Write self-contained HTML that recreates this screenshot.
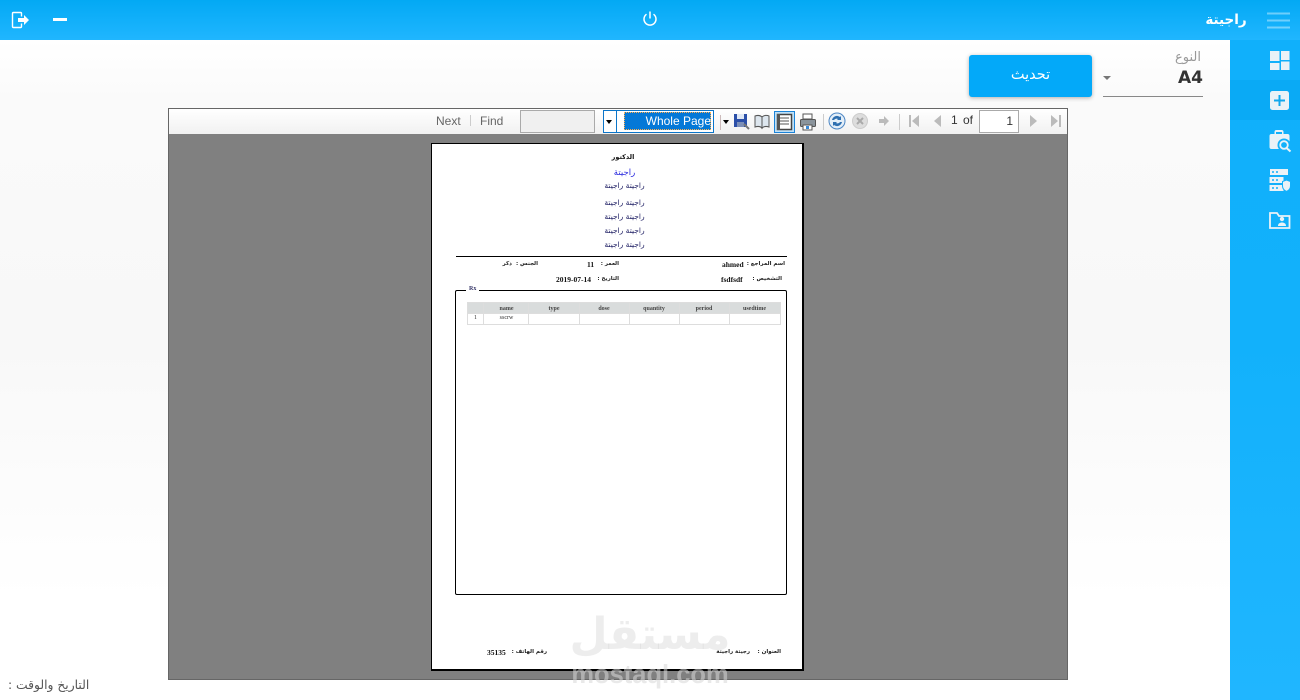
<!DOCTYPE html>
<html lang="ar">
<head>
<meta charset="utf-8">
<title>راجيتة</title>
<style>
html,body{margin:0;padding:0;width:1300px;height:700px;overflow:hidden;background:#fff;font-family:"Liberation Sans","Noto Sans CJK SC",sans-serif}
.a{position:absolute;white-space:nowrap}
#bg{left:0;top:40px;width:1230px;height:660px;background:linear-gradient(#fff 0,#fafafa 60px,#f8f8f8 300px,#fff 560px)}
#top{left:0;top:0;width:1300px;height:40px;background:linear-gradient(#03a9f4,#20b6ff)}
#side{left:1230px;top:40px;width:70px;height:660px;background:linear-gradient(#10b0fb,#12b1fb 300px,#20b6ff)}
.t{direction:rtl;text-align:center;font-family:"Liberation Sans","DejaVu Sans",sans-serif}
.s{font-family:"Liberation Serif",serif;font-weight:bold;font-size:7.500px;color:#111}
.ar{font-family:"DejaVu Sans",sans-serif;font-size:5.500px;font-weight:bold;color:#222;direction:rtl}
.b{color:#226;font-size:7.500px;font-family:"DejaVu Sans",sans-serif;direction:rtl;left:438px;width:373px;text-align:center}
.th{top:304px;height:10px;font:bold 6px/10px "Liberation Serif",serif;color:#444;text-align:center}
.v{background:#ddd;width:1px}
</style>
</head>
<body>
<div class="a" id="bg"></div>
<div class="a" id="top"></div>
<div class="a" id="side"></div>
<div class="a" style="left:1230px;top:80px;width:70px;height:40px;background:#0aaaf5"></div>

<!-- header icons -->
<svg class="a" style="left:0;top:0" width="80" height="40">
<path d="M21.500 16.500V13.500a1 1 0 0 0-1-1h-7a1 1 0 0 0-1 1v13a1 1 0 0 0 1 1h7a1 1 0 0 0 1-1V23.500" fill="none" stroke="#fff" stroke-width="1.400"/>
<path d="M18 18h6v-3l5 5-5 5v-3h-6z" fill="#fff"/>
<rect x="53" y="18" width="14" height="3" fill="#fff"/>
</svg>
<svg class="a" style="left:640px;top:9px" width="20" height="20">
<path d="M6.500 5.200a6 6 0 1 0 7 0" fill="none" stroke="#fff" stroke-width="1.500"/>
<path d="M10 2.500v7" stroke="#fff" stroke-width="1.500"/>
</svg>
<div class="a" style="left:1193px;top:12px;width:66px;text-align:center;color:#fff;font:bold 13.500px 'DejaVu Sans',sans-serif;direction:rtl">راجيتة</div>
<svg class="a" style="left:1267px;top:12px" width="24" height="18"><path d="M0 1.500h23M0 8.500h23M0 15.500h23" stroke="#fff" stroke-opacity=".4" stroke-width="2"/></svg>

<!-- side icons -->
<svg class="a" style="left:1267px;top:49px" width="26" height="190" fill="#eaf2f7">
<rect x="3" y="2" width="9.500" height="10"/><rect x="14" y="2" width="8.500" height="9"/><rect x="3" y="14" width="9.500" height="7"/><rect x="14" y="12.500" width="8.500" height="8.500"/>
<rect x="3" y="42" width="19" height="19" rx="2.500"/><path d="M12.500 46v11M7 51.500h11" stroke="#10a8ee" stroke-width="2"/>
<path d="M2.500 87a2 2 0 0 1 2-2h3v-2a2 2 0 0 1 2-2h5a2 2 0 0 1 2 2v2h4a2 2 0 0 1 2 2v13H4.500a2 2 0 0 1-2-2z"/>
<path d="M9 85v-2h6v2" fill="#12b1fb"/>
<circle cx="17" cy="96" r="6.500" fill="#12b1fb"/>
<circle cx="17" cy="96" r="3.800" fill="none" stroke="#eaf2f7" stroke-width="1.800"/><path d="M19.500 99l4 3.500" stroke="#eaf2f7" stroke-width="2"/>
<rect x="3" y="120" width="18" height="6"/><rect x="2.500" y="128" width="14" height="6"/><rect x="2.500" y="136" width="14" height="6"/>
<path d="M19.500 131l4 1.500v4.500c0 3-2 4.500-4 5.500-2-1-4-2.500-4-5.500v-4.500z" stroke="#12b1fb" stroke-width="1"/>
<path d="M5 123h2M9 123h2M5 131h2M9 131h2M5 139h2M9 139h2" stroke="#10b0fb" stroke-width="1.500"/>
<path d="M3 164h7l2 3h10.500v12H3z" fill="none" stroke="#eaf2f7" stroke-width="1.800"/>
<circle cx="15" cy="170" r="2.200"/><path d="M11 177c0-2.500 1.800-3.500 4-3.500s4 1 4 3.500z"/>
</svg>

<!-- top controls -->
<div class="a" style="left:1150px;top:50px;width:51px;text-align:right;color:#999;font:13px 'DejaVu Sans',sans-serif">النوع</div>
<div class="a" style="left:1150px;top:68px;width:53px;text-align:right;color:#333;font:bold 17px 'DejaVu Sans',sans-serif">A4</div>
<div class="a" style="left:1103px;top:96px;width:100px;height:1px;background:#888"></div>
<div class="a" style="left:1103px;top:76px;width:0;height:0;border:4px solid transparent;border-top:4px solid #777"></div>
<div class="a" style="left:969px;top:55px;width:123px;height:42px;background:#03a9f9;border-radius:3px;box-shadow:0 1px 4px rgba(0,0,0,.3);color:#fff;text-align:center;font:14.500px/41px 'DejaVu Sans',sans-serif">تحديث</div>

<!-- report viewer -->
<div class="a" style="left:168px;top:108px;width:898px;height:570px;border:1px solid #666;background:#808080"></div>
<div class="a" style="left:169px;top:109px;width:898px;height:25px;background:linear-gradient(#fff,#f1f1f1)"></div>

<div class="a" style="left:436px;top:114px;color:#666;font-size:12px">Next</div>
<div class="a" style="left:470px;top:115px;width:1px;height:11px;background:#ccc"></div>
<div class="a" style="left:480px;top:114px;color:#666;font-size:12px">Find</div>
<div class="a" style="left:520px;top:110px;width:73px;height:21px;border:1px solid #aaa;background:#f0f0f0"></div>
<div class="a" style="left:603px;top:110px;width:109px;height:21px;border:1px solid #0b75c9;background:#fff"></div>
<div class="a" style="left:616px;top:110px;width:1px;height:23px;background:#0b75c9"></div>
<div class="a" style="left:606px;top:120px;width:0;height:0;border:3px solid transparent;border-top:4px solid #000"></div>
<div class="a" style="left:624px;top:112px;width:87px;height:18px;background:#0478d7;outline:1px dotted #ffb050;outline-offset:-1px;color:#fff;font-size:12px;line-height:19px;text-align:right">Whole Page</div>
<div class="a" style="left:720px;top:115px;width:1px;height:15px;background:#cbb"></div>
<div class="a" style="left:723px;top:120px;width:0;height:0;border:3px solid transparent;border-top:4px solid #000"></div>

<svg class="a" style="left:730px;top:109px" width="340" height="24">
<path d="M4 5h13v13H4z" fill="#2b4fa8"/><path d="M7 5h7v5H7z" fill="#dfe8f5"/><path d="M7 13h7v5H7z" fill="#7c8fb8"/><path d="M14 15l5 5" stroke="#777" stroke-width="2"/>
<path d="M25 7c3-1 5-1 7 1v11c-2-2-4-2-7-1zM32 8c2-2 5-2 7-1v11c-3-1-5-1-7 1z" fill="#dde6ee" stroke="#555"/>
<rect x="44.500" y="2.500" width="20" height="21" fill="#bfe0f7" stroke="#1b83d8"/>
<rect x="47.500" y="5.500" width="14" height="15" fill="#fff" stroke="#444" stroke-width="1.500"/><path d="M50 9h9M50 12h9M50 15h9" stroke="#555"/><rect x="47" y="5" width="3" height="16" fill="#555"/>
<path d="M73 5h9v5h-9z" fill="#fff" stroke="#555"/><rect x="70.500" y="10.500" width="15" height="7" rx="1" fill="#8a949c" stroke="#555"/><path d="M73 16h9v5h-9z" fill="#fff" stroke="#555"/><rect x="76" y="17" width="3" height="3" fill="#3a8ad8"/>
<path d="M93.500 5v16" stroke="#ccc"/>
<circle cx="107" cy="12" r="8" fill="#e3eef8" stroke="#4c86c4"/><path d="M102 11a5 5 0 0 1 8-3l1-1v4h-4l1-1a3 3 0 0 0-4 1zM112 13a5 5 0 0 1-8 3l-1 1v-4h4l-1 1a3 3 0 0 0 4-1z" fill="#2e6fb0"/>
<circle cx="130" cy="12" r="7.500" fill="#ddd" stroke="#ccc"/><path d="M127 9l6 6M133 9l-6 6" stroke="#aaa" stroke-width="2"/>
<path d="M149 10h5V7l5 5-5 5v-3h-5z" fill="#bbb"/>
<path d="M169.500 5v16" stroke="#ccc"/>
<path d="M179 6h2v12h-2zM189 6v12l-7-6z" fill="#bbb"/>
<path d="M211 6v12l-7-6z" fill="#bbb"/>
<path d="M300 6v12l7-6z" fill="#bbb"/>
<path d="M321 6v12l7-6zM329 6h2v12h-2z" fill="#bbb"/>
</svg>
<div class="a" style="left:951px;top:113px;color:#333;font-size:12px">1</div>
<div class="a" style="left:963px;top:113px;color:#333;font-size:12px">of</div>
<div class="a" style="left:979px;top:110px;width:33px;height:21px;border:1px solid #aaa;background:#fff;color:#333;font-size:12px;line-height:21px;text-align:right;padding-right:5px">1</div>

<!-- page -->
<div class="a" style="left:431px;top:143px;width:370px;height:525px;background:#fff;border:1px solid #000;border-right:2px solid #000;border-bottom:2px solid #000"></div>

<div class="a t" style="left:431px;width:384px;top:153px;color:#111;font-size:6.500px;font-weight:bold">الدكتور</div>
<div class="a b" style="top:168px;color:#22d;font-size:8.500px">راجيتة</div>
<div class="a b" style="top:181px">راجيتة راجيتة</div>
<div class="a b" style="top:198px">راجيتة راجيتة</div>
<div class="a b" style="top:212px">راجيتة راجيتة</div>
<div class="a b" style="top:226px">راجيتة راجيتة</div>
<div class="a b" style="top:240px">راجيتة راجيتة</div>
<div class="a" style="left:456px;top:256px;width:331px;height:1px;background:#000"></div>

<div class="a ar" style="right:515px;top:261px">اسم المراجع :</div>
<div class="a s" style="left:722px;top:260px">ahmed</div>
<div class="a ar" style="right:681px;top:261px">العمر :</div>
<div class="a s" style="left:587px;top:260px">11</div>
<div class="a ar" style="right:762px;top:261px">الجنس :</div>
<div class="a ar" style="right:788px;top:261px">ذكر</div>
<div class="a ar" style="right:518px;top:276px">التشخيص :</div>
<div class="a s" style="left:721px;top:275px">fsdfsdf</div>
<div class="a ar" style="right:681px;top:276px">التاريخ :</div>
<div class="a s" style="left:556px;top:275px">2019-07-14</div>

<div class="a" style="left:455px;top:290px;width:330px;height:303px;border:1px solid #000;border-radius:2px"></div>
<div class="a s" style="left:466px;top:286px;height:9px;line-height:7px;background:#fff;padding:0 3px;color:#336;font-size:6px">Rx</div>

<div class="a" style="left:467px;top:302px;width:312px;height:21px;border:1px solid #ddd;box-sizing:content-box"></div>
<div class="a" style="left:468px;top:303px;width:312px;height:10px;background:#d9dcdc"></div>
<div class="a" style="left:468px;top:313px;width:312px;height:1px;background:#ddd"></div>
<div class="a th" style="left:484px;width:45px">name</div>
<div class="a th" style="left:529px;width:50px">type</div>
<div class="a th" style="left:579px;width:50px">dose</div>
<div class="a th" style="left:629px;width:50px">quantity</div>
<div class="a th" style="left:679px;width:50px">period</div>
<div class="a th" style="left:729px;width:51px">usedtime</div>
<div class="a v" style="left:483px;top:303px;height:21px"></div>
<div class="a v" style="left:528px;top:303px;height:21px"></div>
<div class="a v" style="left:579px;top:303px;height:21px"></div>
<div class="a v" style="left:629px;top:303px;height:21px"></div>
<div class="a v" style="left:679px;top:303px;height:21px"></div>
<div class="a v" style="left:729px;top:303px;height:21px"></div>
<div class="a" style="left:474px;top:315px;font:6px 'Liberation Serif',serif;color:#333">1</div>
<div class="a" style="left:484px;width:45px;top:315px;text-align:center;font:6px 'Liberation Serif',serif;color:#333">sscrw</div>

<div class="a ar" style="right:519px;top:649px">العنوان :</div>
<div class="a ar" style="right:550px;top:649px">رجيتة راجيتة</div>
<div class="a ar" style="right:753px;top:649px">رقم الهاتف :</div>
<div class="a s" style="left:487px;top:648px">35135</div>

<!-- footer label -->
<div class="a" style="left:8px;top:678px;color:#555;font:12.300px 'DejaVu Sans',sans-serif;direction:rtl">التاريخ والوقت :</div>

<!-- watermark -->
<div class="a" style="left:560px;top:609px;width:180px;text-align:center;font:bold 44px 'DejaVu Sans',sans-serif;color:rgba(200,200,200,.33);direction:rtl">مستقل</div>
<div class="a" style="left:550px;top:661px;width:200px;text-align:center;font:bold 25.500px 'Liberation Sans',sans-serif;color:rgba(215,215,215,.55)">mostaql.com</div>
</body>
</html>
